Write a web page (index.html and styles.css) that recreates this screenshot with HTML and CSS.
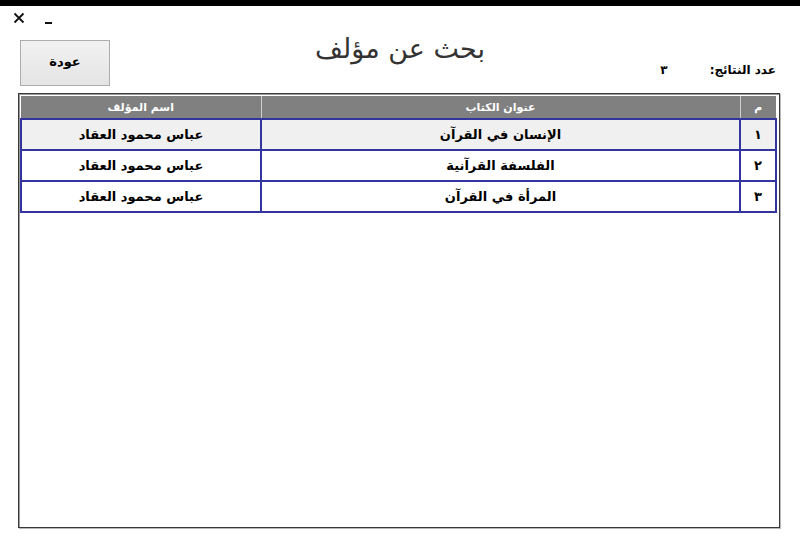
FILE: index.html
```html
<!DOCTYPE html>
<html lang="ar">
<head>
<meta charset="utf-8">
<title>بحث عن مؤلف</title>
<link rel="stylesheet" href="styles.css">
</head>
<body>
<div class="topbar"></div>
<div class="controls">
  <svg class="ic-close" width="12" height="12" viewBox="0 0 12 12"><path d="M1.5 1.5 L10.5 10.5 M10.5 1.5 L1.5 10.5" stroke="#111" stroke-width="1.8" fill="none"/></svg>
  <svg class="ic-min" width="8" height="4" viewBox="0 0 8 4"><rect x="0" y="1" width="7" height="2" fill="#111"/></svg>
</div>
<div class="head">
  <div class="head-left"><button class="back">عودة</button></div>
  <h1 class="title">بحث عن مؤلف</h1>
  <div class="head-right">
    <div class="count" dir="rtl"><span class="count-label">عدد النتائج:</span><span class="count-val">٣</span></div>
  </div>
</div>
<div class="gridbox">
  <table class="grid" dir="rtl">
    <colgroup><col class="c-num"><col class="c-title"><col class="c-author"></colgroup>
    <thead>
      <tr><th>م</th><th>عنوان الكتاب</th><th>اسم المؤلف</th></tr>
    </thead>
    <tbody>
      <tr class="sel"><td>١</td><td>الإنسان في القرآن</td><td>عباس محمود العقاد</td></tr>
      <tr><td>٢</td><td>الفلسفة القرآنية</td><td>عباس محمود العقاد</td></tr>
      <tr><td>٣</td><td>المرأة في القرآن</td><td>عباس محمود العقاد</td></tr>
    </tbody>
  </table>
</div>
</body>
</html>
```
FILE: styles.css
```css
html, body {
  margin: 0;
  padding: 0;
  background: #ffffff;
  font-family: "DejaVu Sans", "Noto Sans", sans-serif;
  width: 800px;
  height: 547px;
  overflow: hidden;
}
.topbar {
  height: 6px;
  background: #000;
}
.controls {
  display: flex;
  align-items: flex-start;
  height: 24px;
}
.ic-close {
  margin: 6px 0 0 13px;
}
.ic-min {
  margin: 15px 0 0 20px;
}
.head {
  display: grid;
  grid-template-columns: 1fr auto 1fr;
  padding: 0 24px 0 20px;
  height: 63px;
}
.head-left {
  display: flex;
  align-items: flex-start;
}
.back {
  margin-top: 10px;
  width: 90px;
  height: 46px;
  border: 1px solid #adadad;
  background: linear-gradient(#f2f2f2, #e4e4e4);
  font-family: "DejaVu Sans", sans-serif;
  font-weight: bold;
  font-size: 13px;
  color: #000;
  padding: 0 0 4px 0;
}
.title {
  margin: 2px 0 0 4px;
  font-weight: normal;
  font-size: 27px;
  color: #333333;
  line-height: 34px;
}
.head-right {
  display: flex;
  justify-content: flex-end;
}
.count {
  display: flex;
  gap: 42px;
  margin-top: 32px;
  font-size: 12px;
  font-weight: bold;
  line-height: 16px;
}
.gridbox {
  margin: 0 20px 0 18px;
  height: 435px;
  border: 1px solid #3a3a3a;
  box-shadow: inset 1px 1px 0 #9a9a9a, 1px 1px 0 #b8b8b8;
  padding: 2px 1px 0 1px;
  box-sizing: border-box;
}
.grid {
  width: 757px;
  border-collapse: collapse;
  table-layout: fixed;
}
.c-num { width: 36px; }
.c-author { width: 240px; }
.grid th {
  background: #808080;
  color: #fff;
  font-weight: bold;
  font-size: 11px;
  height: 22px;
  padding: 0;
  border-left: 1px solid #d0d0d0;
}
.grid th:last-child {
  border-left: none;
}
.grid td {
  height: 29px;
  padding: 0;
  text-align: center;
  font-weight: bold;
  font-size: 13px;
  color: #000;
  border: 2px solid #3434a0;
}
.grid tr.sel td {
  background: #f0f0f0;
}
```
